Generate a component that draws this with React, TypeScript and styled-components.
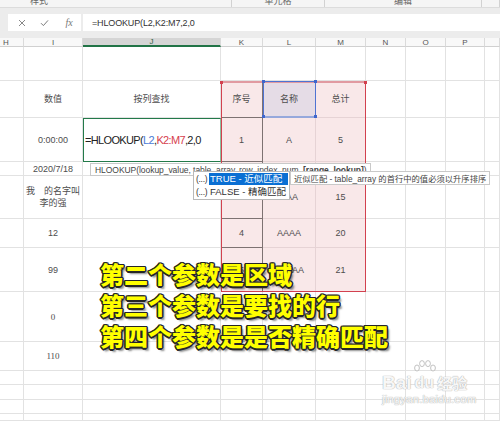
import React from "react";
import styled, { createGlobalStyle } from "styled-components";

const GlobalStyle = createGlobalStyle`
  html, body { margin: 0; padding: 0; background: #fff; }
  body {
    font-family: "Liberation Sans", "Noto Sans CJK SC", sans-serif;
    overflow: hidden;
  }
`;

const Screen = styled.div`
  position: relative;
  width: 500px;
  height: 421px;
  overflow: hidden;
  background: #ececec;
  display: flex;
  flex-direction: column;
`;

const Ribbon = styled.div`
  display: flex;
  height: 7px;
  background: #f5f5f5;
  border-bottom: 1px solid #dcdcdc;
  overflow: hidden;
`;

const RibbonGroup = styled.div<{ $w?: number; $pad?: number }>`
  ${(p) => (p.$w ? `width: ${p.$w}px;` : "flex: 1;")}
  box-sizing: border-box;
  display: flex;
  align-items: flex-end;
  justify-content: ${(p) => (p.$pad !== undefined ? "flex-start" : "center")};
  padding-left: ${(p) => p.$pad ?? 0}px;
  border-right: 1px solid #d2d2d2;
  font-size: 9px;
  line-height: 12px;
  color: #666;
  white-space: nowrap;
`;

const FormulaArea = styled.div`
  display: flex;
  gap: 2px;
  padding: 6px 0 7px 8px;
  background: #ececec;
`;

const ButtonBox = styled.div`
  width: 73px;
  height: 17px;
  background: #fff;
  display: flex;
  align-items: center;
  padding-left: 2px;
  box-sizing: border-box;
`;

const IconSlot = styled.div`
  width: 23px;
  display: flex;
  justify-content: center;
  align-items: center;
  color: #7a7a7a;
`;

const Fx = styled.span`
  font-family: "Liberation Serif", serif;
  font-style: italic;
  font-size: 10px;
  color: #777;
  padding-left: 3px;
`;

const FormulaInput = styled.div`
  flex: 1;
  height: 17px;
  background: #fff;
  display: flex;
  align-items: center;
  padding-left: 9px;
  font-size: 9px;
  letter-spacing: -0.15px;
  color: #333;
`;

const Sheet = styled.div`
  display: grid;
  grid-template-columns: 24px 59px 138px 42px 53px 50px 40px 40px 39px 15px;
  grid-template-rows: 9px 34px 37px 44px 14px 43px 29px 44px 50px 29px 14px 15px 14px 7px;
  background: #fff;
`;

const HeadCell = styled.div<{ $c: number; $active?: boolean; $left?: boolean }>`
  grid-row: 1;
  grid-column: ${(p) => p.$c};
  box-sizing: border-box;
  display: flex;
  align-items: center;
  justify-content: ${(p) => (p.$left ? "flex-start" : "center")};
  padding-left: ${(p) => (p.$left ? 3 : 0)}px;
  background: ${(p) => (p.$active ? "#d5d5d5" : "#f8f8f8")};
  border-right: 1px solid #dadada;
  border-bottom: ${(p) => (p.$active ? "2px solid #217346" : "1px solid #d0d0d0")};
  font-size: 8px;
  color: ${(p) => (p.$active ? "#2f5f43" : "#555")};
`;

type Tone = "pink" | "ref" | undefined;

const Cell = styled.div<{ $r: number; $c: number; $tone?: Tone; $dark?: boolean; $serif?: boolean }>`
  grid-row: ${(p) => p.$r};
  grid-column: ${(p) => p.$c};
  box-sizing: border-box;
  display: flex;
  align-items: center;
  justify-content: center;
  text-align: center;
  white-space: pre-line;
  background: ${(p) => (p.$tone === "ref" ? "#e5dce6" : p.$tone === "pink" ? "#f9e8e9" : "#fff")};
  border-right: 1px solid ${(p) => (p.$dark ? "#7d7272" : p.$tone ? "#e6d3d5" : "#e2e2e2")};
  border-bottom: 1px solid ${(p) => (p.$dark ? "#7d7272" : p.$tone ? "#e6d3d5" : "#e2e2e2")};
  font-family: ${(p) =>
    p.$serif ? `"Liberation Serif", serif` : `"Liberation Sans", "Noto Sans CJK SC", sans-serif`};
  font-size: 9px;
  line-height: 12px;
  color: #4d4d4d;
`;

const ActiveCell = styled.div`
  grid-row: 4;
  grid-column: 3;
  z-index: 2;
  box-sizing: border-box;
  display: flex;
  align-items: center;
  padding-left: 1px;
  background: #fff;
  border: 1.5px solid #237a4a;
  border-right-color: #8cbf9f;
  font-size: 11px;
  letter-spacing: -0.65px;
  color: #222;
  white-space: nowrap;
`;

const RefText = styled.span<{ $color: string }>`
  color: ${(p) => p.$color};
`;

const RangeBox = styled.div`
  grid-row: 3 / 9;
  grid-column: 4 / 7;
  z-index: 3;
  position: relative;
  box-sizing: border-box;
  border: 1px solid #d2414f;
  border-top: 2px solid #e19aa1;
  pointer-events: none;
`;

const RefBox = styled.div`
  grid-row: 3;
  grid-column: 5;
  z-index: 4;
  position: relative;
  box-sizing: border-box;
  border: 1px solid #4f73d2;
  border-bottom: 2px solid #95a8dc;
  pointer-events: none;
`;

const Handle = styled.span<{ $color: string; $x: "left" | "right"; $y: "top" | "bottom" }>`
  position: absolute;
  width: 3px;
  height: 3px;
  background: ${(p) => p.$color};
  ${(p) => p.$x}: -2px;
  ${(p) => p.$y}: -2px;
`;

const ArgTip = styled.div`
  position: absolute;
  left: 90px;
  top: 163px;
  z-index: 10;
  height: 13px;
  box-sizing: border-box;
  padding: 0 3px 0 4px;
  display: flex;
  align-items: center;
  background: #fff;
  border: 1px solid #c9c9c9;
  font-size: 8.5px;
  letter-spacing: -0.05px;
  color: #444;
  white-space: nowrap;
`;

const Dropdown = styled.div`
  position: absolute;
  left: 193px;
  top: 171px;
  z-index: 11;
  width: 97px;
  box-sizing: border-box;
  padding: 1px;
  background: #fff;
  border: 1px solid #b9b9b9;
  display: flex;
  flex-direction: column;
  gap: 1px;
`;

const Option = styled.div`
  display: flex;
  height: 12px;
  align-items: center;
  font-size: 9.5px;
  color: #333;
  white-space: nowrap;
`;

const Ellipsis = styled.span`
  width: 13px;
  padding-left: 1px;
  font-size: 8.5px;
  letter-spacing: -0.3px;
`;

const OptionLabel = styled.span<{ $on?: boolean }>`
  flex: 1;
  height: 12px;
  line-height: 12px;
  padding-left: 1px;
  overflow: hidden;
  background: ${(p) => (p.$on ? "#0a6fd3" : "transparent")};
  color: ${(p) => (p.$on ? "#fff" : "#333")};
`;

const SideTip = styled.div`
  position: absolute;
  left: 290px;
  top: 171px;
  z-index: 11;
  width: 200px;
  height: 14px;
  box-sizing: border-box;
  padding-left: 3px;
  display: flex;
  align-items: center;
  background: #fff;
  border: 1px solid #c9c9c9;
  font-size: 8.3px;
  color: #444;
  white-space: nowrap;
  overflow: hidden;
`;

const OUTLINE = "#262626";
const Caption = styled.div`
  position: absolute;
  left: 100px;
  top: 258px;
  z-index: 12;
  font-family: "Noto Sans CJK SC", sans-serif;
  font-weight: 900;
  font-size: 24px;
  line-height: 31px;
  color: #ffff00;
  white-space: nowrap;
  text-shadow: -1.1px -1.1px 0 ${OUTLINE}, 1.1px -1.1px 0 ${OUTLINE}, -1.1px 1.1px 0 ${OUTLINE},
    1.1px 1.1px 0 ${OUTLINE}, 0 -1.5px 0 ${OUTLINE}, 0 1.5px 0 ${OUTLINE}, -1.5px 0 0 ${OUTLINE},
    1.5px 0 0 ${OUTLINE}, 2.5px 2.5px 2px rgba(0, 0, 0, 0.45);
`;

const Watermark = styled.div`
  position: absolute;
  left: 382px;
  top: 372px;
  z-index: 12;
  display: flex;
  flex-direction: column;
  color: rgba(255, 255, 255, 0.92);
  text-shadow: 0 0 1px #b0b0b0, 0 0 1px #b0b0b0;
  pointer-events: none;
`;

const Brand = styled.div`
  display: flex;
  align-items: flex-end;
  font-weight: bold;
  font-size: 19px;
  line-height: 21px;
`;

const Du = styled.span`
  position: relative;
  margin-left: 3px;
  font-size: 16px;
`;

const Paw = styled.svg`
  position: absolute;
  left: -2px;
  top: -12px;
`;

const Jingyan = styled.span`
  margin-left: 3px;
  font-family: "Noto Sans CJK SC", sans-serif;
  font-size: 15px;
`;

const Domain = styled.div`
  font-size: 11.5px;
  line-height: 13px;
  letter-spacing: 0.1px;
`;

const columns = ["H", "I", "J", "K", "L", "M", "N", "O", "P", ""];

const content: Record<string, string> = {
  "3-2": "数值",
  "3-3": "按列查找",
  "3-4": "序号",
  "3-5": "名称",
  "3-6": "总计",
  "4-2": "0:00:00",
  "4-4": "1",
  "4-5": "A",
  "4-6": "5",
  "5-2": "2020/7/18",
  "5-4": "2",
  "5-5": "AA",
  "5-6": "10",
  "6-2": "我　的名字叫\n李的强",
  "6-4": "3",
  "6-5": "AAA",
  "6-6": "15",
  "7-2": "12",
  "7-4": "4",
  "7-5": "AAAA",
  "7-6": "20",
  "8-2": "99",
  "8-4": "5",
  "8-5": "AAAAA",
  "8-6": "21",
  "9-2": "0",
  "10-2": "110",
};

const serifCells = new Set(["9-2", "10-2"]);

const CloseIcon = () => (
  <svg width="8" height="8" viewBox="0 0 8 8">
    <path d="M1 1L7 7M7 1L1 7" stroke="#7a7a7a" strokeWidth="0.9" fill="none" />
  </svg>
);

const CheckIcon = () => (
  <svg width="9" height="8" viewBox="0 0 9 8">
    <path d="M1 4.2L3.4 6.6L8 1.4" stroke="#7a7a7a" strokeWidth="1" fill="none" />
  </svg>
);

const Formula = () => (
  <>
    =HLOOKUP(<RefText $color="#4a7bd6">L2</RefText>,<RefText $color="#d6404e">K2:M7</RefText>,2,0
  </>
);

export default function App() {
  const cells: React.ReactNode[] = [];
  for (let r = 2; r <= 14; r++) {
    for (let c = 1; c <= 10; c++) {
      if (r === 4 && c === 3) continue;
      const key = `${r}-${c}`;
      const pink = r >= 3 && r <= 8 && c >= 4 && c <= 6;
      const tone: Tone = r === 3 && c === 5 ? "ref" : pink ? "pink" : undefined;
      cells.push(
        <Cell
          key={key}
          $r={r}
          $c={c}
          $tone={tone}
          $dark={c === 4 && r >= 3 && r <= 8}
          $serif={serifCells.has(key)}
        >
          {content[key]}
        </Cell>
      );
    }
  }

  return (
    <Screen>
      <GlobalStyle />
      <Ribbon>
        <RibbonGroup $w={232} $pad={30}>样式</RibbonGroup>
        <RibbonGroup $w={93}>单元格</RibbonGroup>
        <RibbonGroup $w={157}>编辑</RibbonGroup>
        <RibbonGroup />
      </Ribbon>

      <FormulaArea>
        <ButtonBox>
          <IconSlot>
            <CloseIcon />
          </IconSlot>
          <IconSlot>
            <CheckIcon />
          </IconSlot>
          <IconSlot>
            <Fx>fx</Fx>
          </IconSlot>
        </ButtonBox>
        <FormulaInput>=HLOOKUP(L2,K2:M7,2,0</FormulaInput>
      </FormulaArea>

      <Sheet>
        {columns.map((name, i) => (
          <HeadCell key={i} $c={i + 1} $active={name === "J"} $left={name === "H"}>
            {name}
          </HeadCell>
        ))}
        {cells}
        <ActiveCell>
          <Formula />
        </ActiveCell>
        <RangeBox>
          <Handle $color="#d2414f" $x="left" $y="top" />
          <Handle $color="#d2414f" $x="right" $y="top" />
        </RangeBox>
        <RefBox>
          <Handle $color="#3f66cc" $x="left" $y="top" />
          <Handle $color="#3f66cc" $x="right" $y="top" />
          <Handle $color="#3f66cc" $x="left" $y="bottom" />
          <Handle $color="#3f66cc" $x="right" $y="bottom" />
        </RefBox>
      </Sheet>

      <ArgTip>
        HLOOKUP(lookup_value, table_array, row_index_num,&nbsp;<b>[range_lookup]</b>)
      </ArgTip>

      <Dropdown>
        <Option>
          <Ellipsis>(...)</Ellipsis>
          <OptionLabel $on>TRUE - 近似匹配</OptionLabel>
        </Option>
        <Option>
          <Ellipsis>(...)</Ellipsis>
          <OptionLabel>FALSE - 精确匹配</OptionLabel>
        </Option>
      </Dropdown>

      <SideTip>近似匹配 - table_array 的首行中的值必须以升序排序</SideTip>

      <Caption>
        第二个参数是区域
        <br />
        第三个参数是要找的行
        <br />
        第四个参数是是否精确匹配
      </Caption>

      <Watermark>
        <Brand>
          <span>Bai</span>
          <Du>
            <Paw width="24" height="16" viewBox="0 0 24 16">
              <g fill="rgba(255,255,255,0.9)" stroke="#b3b3b3" strokeWidth="0.8">
                <ellipse cx="4" cy="8" rx="2.4" ry="3" />
                <ellipse cx="9" cy="3.6" rx="2.4" ry="3" />
                <ellipse cx="15" cy="3.6" rx="2.4" ry="3" />
                <ellipse cx="20" cy="8" rx="2.4" ry="3" />
              </g>
            </Paw>
            du
          </Du>
          <Jingyan>经验</Jingyan>
        </Brand>
        <Domain>jingyan.baidu.com</Domain>
      </Watermark>
    </Screen>
  );
}
